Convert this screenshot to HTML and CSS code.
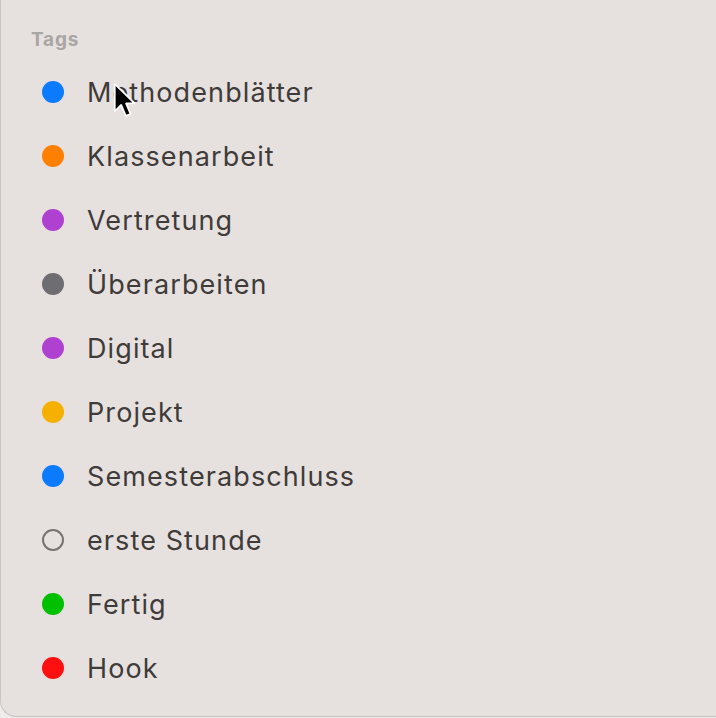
FILE: index.html
```html
<!DOCTYPE html>
<html lang="de">
<head>
<meta charset="utf-8">
<link rel="stylesheet" href="styles.css">
</head>
<body>
<div class="panel">
  <div class="heading">Tags</div>
  <ul class="tags">
    <li class="tag"><span class="dot blue"></span><span class="label">Methodenblätter</span></li>
    <li class="tag"><span class="dot orange"></span><span class="label">Klassenarbeit</span></li>
    <li class="tag"><span class="dot purple"></span><span class="label">Vertretung</span></li>
    <li class="tag"><span class="dot gray"></span><span class="label">Überarbeiten</span></li>
    <li class="tag"><span class="dot purple"></span><span class="label">Digital</span></li>
    <li class="tag"><span class="dot yellow"></span><span class="label">Projekt</span></li>
    <li class="tag"><span class="dot blue"></span><span class="label">Semesterabschluss</span></li>
    <li class="tag"><span class="dot ring"></span><span class="label">erste Stunde</span></li>
    <li class="tag"><span class="dot green"></span><span class="label">Fertig</span></li>
    <li class="tag"><span class="dot red"></span><span class="label">Hook</span></li>
  </ul>
  <svg class="cursor" width="28" height="41" viewBox="0 0 24 35">
    <path d="M1.5 1.5 L1.5 25 L7 19.5 L11 29 L15 27.3 L11.2 18.3 L18.5 18.3 Z" fill="#000" stroke="#fff" stroke-width="1.5" stroke-linejoin="round"/>
  </svg>
</div>
</body>
</html>
```
FILE: styles.css
```css
html, body {
  margin: 0;
  padding: 0;
  background: #efedec;
}
.panel {
  position: relative;
  width: 715px;
  height: 716px;
  background: #e6e1df;
  border-left: 1px solid #c9c5c3;
  border-bottom: 1px solid #c9c5c3;
  border-bottom-left-radius: 16px;
  font-family: Inter, "Liberation Sans", Arial, sans-serif;
  overflow: hidden;
}
.heading {
  padding: 29px 0 0 30px;
  font-size: 19px;
  line-height: 22px;
  font-weight: 700;
  letter-spacing: 0.8px;
  color: #aaa6a4;
}
.tags {
  list-style: none;
  margin: 9px 0 0 0;
  padding: 0 0 0 41px;
  display: flex;
  flex-direction: column;
}
.tag {
  height: 64px;
  display: flex;
  align-items: center;
}
.dot {
  width: 22px;
  height: 22px;
  border-radius: 50%;
  box-sizing: border-box;
  flex: none;
}
.blue { background: #0a7aff; }
.orange { background: #ff7f00; }
.purple { background: #b040d0; }
.gray { background: #6e6d72; }
.yellow { background: #f5b000; }
.green { background: #00c000; }
.red { background: #ff1010; }
.ring { border: 2px solid #77736f; }
.label {
  margin-left: 23px;
  font-size: 27px;
  letter-spacing: 1.1px;
  color: #3f3b39;
}
.cursor {
  position: absolute;
  left: 112px;
  top: 82px;
}
```
